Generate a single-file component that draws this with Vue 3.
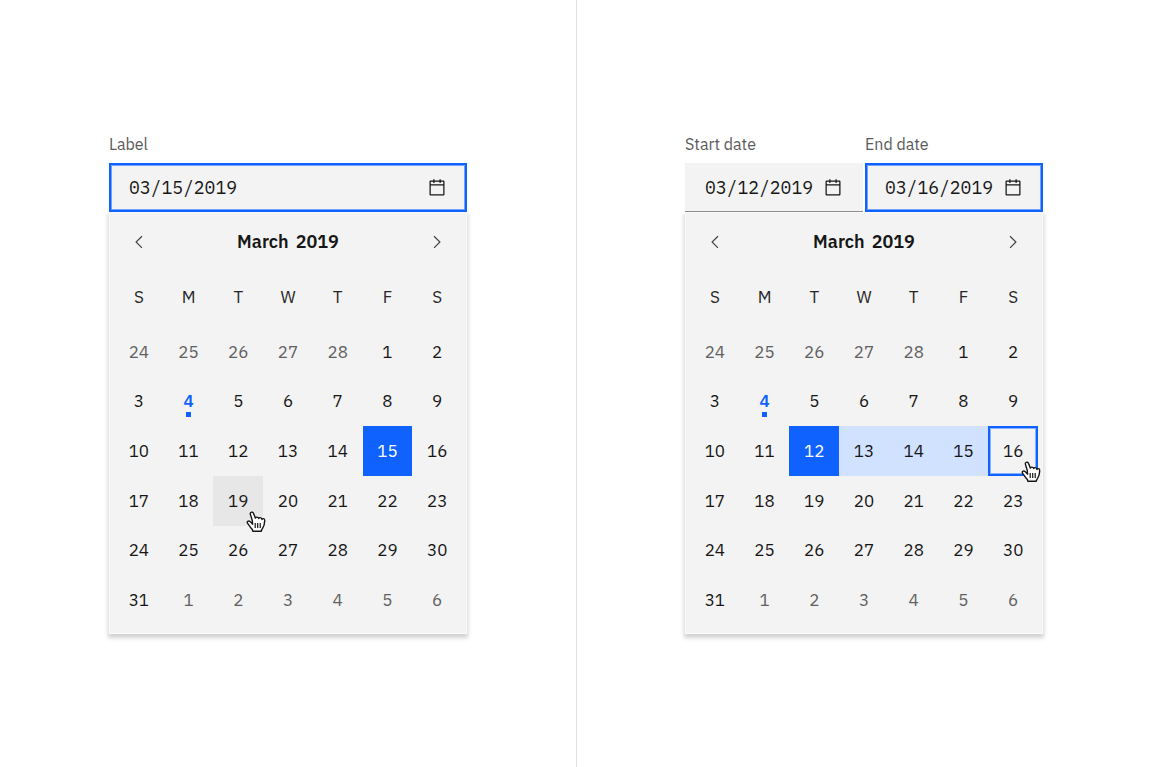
<script setup>
import { ref } from 'vue'

const weekdays = ['S', 'M', 'T', 'W', 'T', 'F', 'S']

const numbers = [
  ...[24, 25, 26, 27, 28],
  ...Array.from({ length: 31 }, (_, i) => i + 1),
  ...[1, 2, 3, 4, 5, 6],
]

function buildWeeks(states, pointerOn) {
  const days = numbers.map((n, i) => {
    const inMonth = i >= 5 && i < 36
    return {
      n,
      state: inMonth ? ['day', states[n], n === 4 ? 'today' : ''] : ['day', 'outside'],
      pointer: inMonth && n === pointerOn,
    }
  })
  return Array.from({ length: 6 }, (_, w) => days.slice(w * 7, w * 7 + 7))
}

const pickers = ref([
  {
    id: 'single',
    fields: [{ id: 'single-date', label: 'Label', value: '03/15/2019', focused: true }],
    weeks: buildWeeks({ 15: 'selected', 19: 'hovered' }, 19),
  },
  {
    id: 'range',
    fields: [
      { id: 'start-date', label: 'Start date', value: '03/12/2019', focused: false },
      { id: 'end-date', label: 'End date', value: '03/16/2019', focused: true },
    ],
    weeks: buildWeeks({ 12: 'selected', 13: 'in-range', 14: 'in-range', 15: 'in-range', 16: 'range-end' }, 16),
  },
])
</script>

<template>
  <main class="page">
    <section v-for="picker in pickers" :key="picker.id" class="panel">
      <div class="picker">
        <div class="fields">
          <div v-for="field in picker.fields" :key="field.id" class="field">
            <label :for="field.id">{{ field.label }}</label>
            <div class="box" :class="{ focused: field.focused }">
              <input :id="field.id" v-model="field.value" type="text" />
              <svg class="icon" viewBox="0 0 32 32" aria-hidden="true">
                <path d="M26,4h-4V2h-2v2h-8V2h-2v2H6C4.9,4,4,4.9,4,6v20c0,1.1,0.9,2,2,2h20c1.1,0,2-0.9,2-2V6C28,4.9,27.1,4,26,4z M26,26H6V12h20V26z M26,10H6V6h4v2h2V6h8v2h2V6h4V10z" />
              </svg>
            </div>
          </div>
        </div>
        <div class="calendar">
          <header class="month">
            <button type="button" class="nav" aria-label="Previous month">
              <svg class="icon" viewBox="0 0 16 16"><path d="M5 8L10 3l.7.7L6.4 8l4.3 4.3-.7.7z" /></svg>
            </button>
            <h2><span>March</span><span>2019</span></h2>
            <button type="button" class="nav" aria-label="Next month">
              <svg class="icon" viewBox="0 0 16 16"><path d="M11 8l-5 5-.7-.7L9.6 8 5.3 3.7 6 3z" /></svg>
            </button>
          </header>
          <table>
            <thead>
              <tr>
                <th v-for="(d, i) in weekdays" :key="i" scope="col">{{ d }}</th>
              </tr>
            </thead>
            <tbody>
              <tr v-for="(week, w) in picker.weeks" :key="w">
                <td v-for="(day, d) in week" :key="d">
                  <button type="button" :class="day.state">{{ day.n }}</button>
                  <svg v-if="day.pointer" class="pointer" viewBox="0 0 20 22" aria-hidden="true">
                    <path d="M6.6 13.2C6 12.400 5 11.300 4 10.500C2.900 9.700 1.400 10 1.200 11.200C1.100 11.900 1.700 12.600 2.400 13.400C3.400 14.600 4.100 16 5.200 17.200C6 18.100 6.800 18.700 6.800 20.300H15.300C15.400 18.800 16 17.900 16.800 16.800C17.900 15.300 18.600 12.500 18.700 9.900C18.800 8.400 18.400 7.700 17.500 7.600C16.700 7.500 16.200 7.900 15.900 8.500C15.800 7.300 15.200 6.600 14.200 6.600C13.400 6.600 12.900 7 12.700 7.600C12.400 6.600 11.800 6.100 10.900 6.100C10.100 6.100 9.600 6.500 9.300 7.100C8.800 5.600 8.200 3.900 7.600 2.600C7 1.100 5.900.9 5.100 1.300C4.200 1.700 4.100 2.600 4.500 3.700C5.200 5.700 5.900 7.800 6.300 9.700z" />
                    <path class="crease" d="M9.200 12v5M11.700 12v5M14.200 12v5" />
                  </svg>
                </td>
              </tr>
            </tbody>
          </table>
        </div>
      </div>
    </section>
  </main>
</template>

<style>
body {
  margin: 0;
  background: #fff;
}
</style>

<style scoped>
* {
  box-sizing: border-box;
}

.page {
  display: grid;
  grid-template-columns: 1fr 1fr;
  min-height: 100vh;
  color: #161616;
  font-family: "IBM Plex Sans", "Noto Sans", sans-serif;
}

.panel {
  display: flex;
  justify-content: center;
  align-items: center;
  padding: 0 24px;
}

.panel + .panel {
  box-shadow: inset 1px 0 #e0e0e0;
}

.picker {
  flex: 0 1 358px;
}

.fields {
  display: flex;
  gap: 2px;
}

.field {
  flex: 1;
  min-width: 0;
}

label {
  display: block;
  margin-bottom: 8px;
  color: #5a5a5a;
  font-size: 16px;
  line-height: 22px;
}

.box {
  display: flex;
  align-items: center;
  height: 49px;
  padding: 0 20px;
  background: #f3f3f3;
  box-shadow: inset 0 -1px #8d8d8d;
}

.box.focused {
  box-shadow: inset 0 0 0 2px #0f62fe, inset 0 0 0 3px #6fa1fd;
}

input {
  flex: 1;
  width: 0;
  min-width: 0;
  height: 32px;
  padding: 0;
  border: 0;
  outline: 0;
  background: transparent;
  color: #161616;
  font: 18px "IBM Plex Mono", "Liberation Mono", monospace;
}

.icon {
  display: block;
  flex: none;
  width: 20px;
  height: 20px;
  fill: #161616;
}

.calendar {
  padding: 0 4px 8px;
  border: 1px solid #fafafa;
  background: #f3f3f3;
  box-shadow: 0 3px 4px 1px rgba(0, 0, 0, 0.18);
}

.month {
  display: flex;
  align-items: center;
  justify-content: space-between;
  height: 58px;
}

.nav {
  display: grid;
  place-items: center;
  width: 50px;
  height: 50px;
  padding: 0;
  border: 0;
  background: transparent;
}

.nav .icon {
  fill: #444;
}

h2 {
  display: flex;
  gap: 7px;
  margin: 0;
  font-size: 18px;
  font-weight: 600;
  line-height: 24px;
}

table,
thead {
  display: block;
}

tr {
  display: grid;
  grid-template-columns: repeat(7, 1fr);
}

th {
  height: 56px;
  padding: 0;
  color: #262626;
  font-size: 17px;
  font-weight: 400;
  line-height: 52px;
  text-align: center;
}

tbody {
  display: grid;
  grid-template-rows: repeat(6, 1fr);
  height: 298px;
}

td {
  position: relative;
  display: flex;
  padding: 0;
}

.day {
  position: relative;
  flex: 1;
  padding: 0;
  border: 0;
  background: transparent;
  color: #161616;
  font: 17px "IBM Plex Sans", "DejaVu Sans", sans-serif;
}

.outside {
  color: #606060;
}

.today {
  color: #0f62fe;
  font-weight: 600;
}

.today::after {
  content: "";
  position: absolute;
  bottom: 9px;
  left: calc(50% - 3px);
  width: 5px;
  height: 5px;
  background: #0f62fe;
}

.selected {
  background: #0f62fe;
  color: #fff;
}

.hovered {
  background: #e7e7e7;
}

.in-range {
  background: #d0e2ff;
}

.range-end {
  box-shadow: inset 0 0 0 2px #0f62fe, inset 0 0 0 3px #8ab2fc;
}

.pointer {
  position: absolute;
  right: -3px;
  bottom: -7px;
  z-index: 1;
  width: 20px;
  height: 22px;
  fill: #fff;
  stroke: #161616;
  stroke-width: 1.4;
  stroke-linejoin: round;
}

.crease {
  fill: none;
  stroke-width: 1.2;
}
</style>
